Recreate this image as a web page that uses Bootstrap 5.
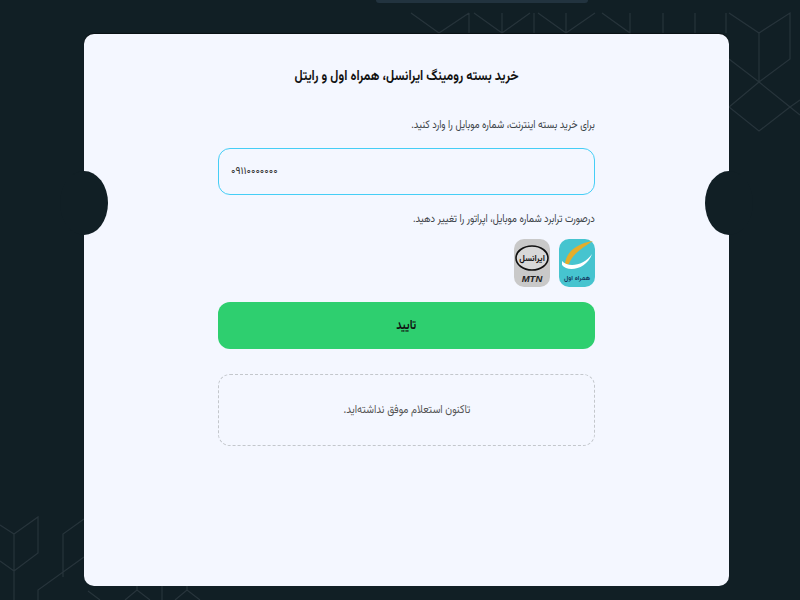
<!doctype html>
<html lang="fa" dir="rtl">
<head>
<meta charset="utf-8">
<title>خرید بسته رومینگ</title>
<link href="https://cdn.jsdelivr.net/npm/bootstrap@5.3.0/dist/css/bootstrap.min.css" rel="stylesheet">
<style>
html,body{height:100%;margin:0;overflow:hidden}
body{background:#111f25;font-family:"Vazirmatn","DejaVu Sans",sans-serif;position:relative}
.bg-art{position:absolute;inset:0;width:800px;height:600px}
.bg-art path{fill:none;stroke:#27343b;stroke-width:1.2}
.top-tab{position:absolute;top:0;left:376px;width:212px;height:3px;background:#22333f;border-radius:0 0 3px 3px}
.page-wrap{position:relative;height:600px;padding:34px 71px 14px 84px}
.sheet{position:relative;height:100%;background:#f4f7ff;border-radius:10px;padding:33px 134px 0;box-shadow:0 -1px 1px rgba(0,0,0,.5)}
.notch{position:absolute;top:137px;width:48px;height:64px;border-radius:50%;background:#111f25}
.notch-l{left:-24px}
.notch-r{right:-24px}
.squeeze{display:inline-block;white-space:nowrap}
.head-title{font-size:14px;font-weight:700;color:#111;line-height:20px;margin:0 0 30px;text-align:center}
.head-title .squeeze{transform:scaleX(.878)}
.hint{font-size:11.5px;color:#3c4449;line-height:16px;margin:0}
.hint .squeeze{transform:scaleX(.82);transform-origin:right center}
.phone.form-control{height:47px;margin:15px 0 16px;border:1.5px solid #45cef6;border-radius:12px;background:#f4f7ff;padding:0 12px;font-size:10.5px;color:#333;box-shadow:none}
.ops{gap:9px;margin:12px 0 15px}
.ops svg{display:block;width:36px;height:48px}
.ok-btn.btn{height:47px;width:100%;background:#2ecf6f;border:0;border-radius:12px;color:#111;font-size:13px;font-weight:700;padding:2px 0 0}
.ok-btn .squeeze{transform:scaleX(.82)}
.empty-box{height:72px;margin-top:25px;border:1px dashed #c3c7cc;border-radius:12px;color:#555;font-size:12px}
.empty-box .squeeze{transform:scaleX(.835)}
</style>
</head>
<body>
<svg class="bg-art" viewBox="0 0 800 600" aria-hidden="true">
<path d="M411 13L439 33L469 13M469 13V33M474 13L502 33L530 13M502 13V33M534 13V33M538 13L566 33L595 13M566 13V33M602 13L630 33V13M663 13V33M695 13V33M726 13V33"/>
<path d="M729 13L759 33L790 13V59L759 82L729 59M759 33V82M759 82L729 107L759 131L790 107L800 100M759 82L790 107L800 115"/>
<path d="M0 525L14 534L38 517V553L14 571L0 561M14 534V600M63 577V534L84 519M84 557L38 590V600"/>
<path d="M88 591L100 600M125 600L137 590L150 600M137 586V590M162 586V600M175 600L187 590L200 600M187 586V590"/>
</svg>
<div class="top-tab"></div>
<div class="page-wrap">
  <main class="sheet">
    <span class="notch notch-l"></span>
    <span class="notch notch-r"></span>
    <h1 class="head-title"><span class="squeeze">خرید بسته رومینگ ایرانسل، همراه اول و رایتل</span></h1>
    <p class="hint"><span class="squeeze">برای خرید بسته اینترنت، شماره موبایل را وارد کنید.</span></p>
    <input class="form-control phone" dir="ltr" type="text" value="۰۹۱۱۰۰۰۰۰۰۰">
    <p class="hint"><span class="squeeze">درصورت ترابرد شماره موبایل، اپراتور را تغییر دهید.</span></p>
    <div class="d-flex ops">
      <svg viewBox="0 0 36 48" role="img" aria-label="همراه اول">
        <rect width="36" height="48" rx="10" fill="#46c4cf"/>
        <path d="M6 25C7 12 20 4 34 2C25 8 13 15 10 25Z" fill="#e5ad2b"/>
        <path d="M3 22C9 29 25 27 33 15C28 30 9 34 3 26Z" fill="#fff"/>
        <text x="18" y="41" font-size="6.5" font-weight="700" fill="#12395f" text-anchor="middle">همراه اول</text>
      </svg>
      <svg viewBox="0 0 36 48" role="img" aria-label="ایرانسل">
        <rect width="36" height="48" rx="10" fill="#c9c9c9"/>
        <ellipse cx="18" cy="19" rx="16" ry="12" fill="#d8d8d8" stroke="#111" stroke-width="1.6"/>
        <text x="18" y="22" font-size="8.5" font-weight="700" fill="#111" text-anchor="middle">ایرانسل</text>
        <text x="18" y="43" font-size="9.5" font-weight="700" font-style="italic" fill="#222" text-anchor="middle" font-family="Liberation Sans">MTN</text>
      </svg>
    </div>
    <button type="button" class="btn ok-btn"><span class="squeeze">تایید</span></button>
    <div class="empty-box d-flex align-items-center justify-content-center"><span class="squeeze">تاکنون استعلام موفق نداشته‌اید.</span></div>
  </main>
</div>
</body>
</html>
